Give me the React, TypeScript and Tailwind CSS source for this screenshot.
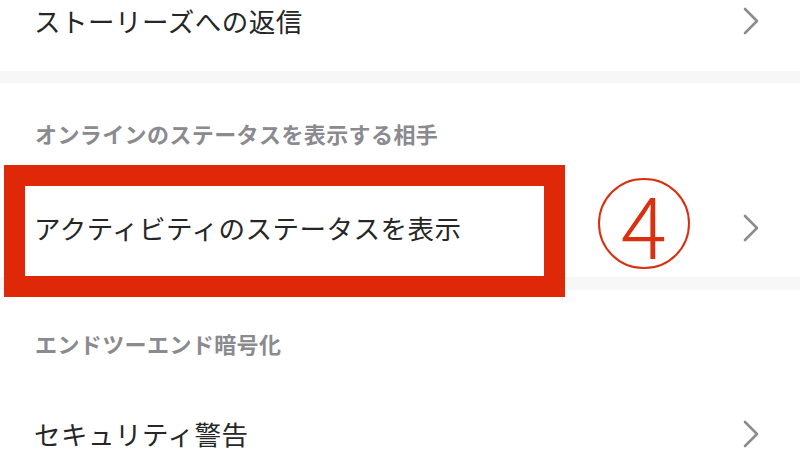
import React from "react";

const jp = { fontFamily: '"Noto Sans CJK JP", "Noto Sans", sans-serif' };

function Chevron() {
  return (
    <svg width="16" height="28" viewBox="0 0 16 28" className="shrink-0">
      <polyline
        points="2,2 14,14 2,26"
        fill="none"
        stroke="#8b8b90"
        strokeWidth="2.6"
        strokeLinecap="round"
        strokeLinejoin="round"
      />
    </svg>
  );
}

function Row({ label, className = "" }: { label: string; className?: string }) {
  return (
    <div className={`flex items-center justify-between pl-[34px] pr-[41px] h-[98px] ${className}`}>
      <span className="text-[26.5px] leading-none tracking-[0.5px] text-[#262626]">{label}</span>
      <Chevron />
    </div>
  );
}

function SectionHeader({ title, className = "" }: { title: string; className?: string }) {
  return (
    <div className={`flex items-center pl-[35px] ${className}`}>
      <span className="text-[22px] leading-none font-semibold tracking-[0.4px] text-[#8a8a8f]">
        {title}
      </span>
    </div>
  );
}

export default function App() {
  return (
    <div className="relative w-[800px] h-[450px] overflow-hidden bg-white" style={jp}>
      {/* Settings list */}
      <div className="flex flex-col">
        <Row label="ストーリーズへの返信" className="-mt-[29px] h-[100px]" />
        <div className="h-[12px] bg-[#f7f7f7]" />
        <SectionHeader title="オンラインのステータスを表示する相手" className="h-[96px] pt-[4px]" />
        <Row label="アクティビティのステータスを表示" />
        <div className="h-[13px] bg-[#f7f7f7]" />
        <SectionHeader title="エンドツーエンド暗号化" className="h-[97px] pt-[8px]" />
        <Row label="セキュリティ警告" className="-mt-[2px]" />
      </div>

      {/* Annotation: red frame */}
      <div className="absolute left-[4px] top-[165px] w-[561px] h-[132px] border-[21px] border-[#df2808]" />

      {/* Annotation: circled number */}
      <div className="absolute left-[598px] top-[178px] w-[92px] h-[91px] rounded-full border-2 border-[#d9300f] flex items-center justify-center">
        <span className="text-[86px] leading-none font-light text-[#d9300f] -mt-[3px]">4</span>
      </div>
    </div>
  );
}
